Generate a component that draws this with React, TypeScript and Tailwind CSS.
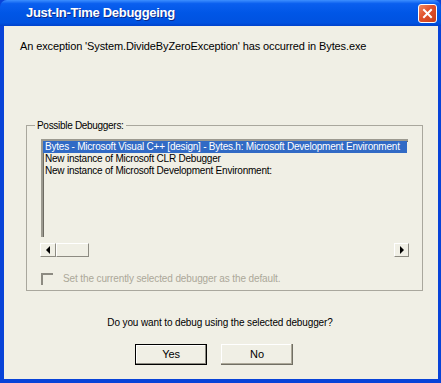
import React from 'react';

const rows = [
  'Bytes - Microsoft Visual C++ [design] - Bytes.h: Microsoft Development Environment',
  'New instance of Microsoft CLR Debugger',
  'New instance of Microsoft Development Environment:',
];

const ArrowLeft = () => (
  <span className="w-0 h-0 border-y-[4px] border-y-transparent border-r-[4px] border-r-black" />
);

const ArrowRight = () => (
  <span className="w-0 h-0 border-y-[4px] border-y-transparent border-l-[4px] border-l-black" />
);

export default function App() {
  return (
    <div className="w-[441px] h-[383px] bg-[#0843d8] flex flex-col font-['Liberation_Sans',Arial,sans-serif] text-[10px] tracking-[-0.12px] text-black select-none">
      {/* Title bar */}
      <div className="h-[26px] shrink-0 flex items-center pl-[26px] pr-[4px] rounded-t-[7px] bg-[linear-gradient(to_bottom,#3d8fff_0%,#0a5fef_14%,#0056e6_50%,#0052e0_88%,#0042cc_100%)]">
        <span className="text-white font-bold text-[13px] tracking-[-0.3px] [text-shadow:1px_1px_0_#0b2a8c]">
          Just-In-Time Debuggeing
        </span>
        <div className="ml-auto w-[19px] h-[19px] rounded-[3px] border border-white bg-[linear-gradient(135deg,#f08a63_0%,#e0502a_45%,#c8401c_100%)] flex items-center justify-center">
          <svg width="11" height="11" viewBox="0 0 11 11">
            <path d="M2 2 L9 9 M9 2 L2 9" stroke="white" strokeWidth="2" strokeLinecap="square" />
          </svg>
        </div>
      </div>

      {/* Client area */}
      <div className="flex-1 ml-[4px] mr-[3px] mb-[4px] bg-[#f0efe5] flex flex-col">
        <p className="pt-[14px] pl-[16px] leading-[13px] text-[11px] tracking-[-0.12px]">
          An exception 'System.DivideByZeroException' has occurred in Bytes.exe
        </p>

        {/* Group box */}
        <div className="relative mt-[72px] ml-[22px] w-[397px] h-[166px] border border-[#a9a79d] flex flex-col">
          <span className="absolute -top-[7px] left-[8px] px-[2px] bg-[#f0efe5] leading-[13px] tracking-[-0.3px]">
            Possible Debuggers:
          </span>

          <div className="mt-[13px] ml-[14px] w-[367px] h-[98px] border-l-2 border-t-2 border-l-[#9c9a90] border-t-[#9c9a90] shadow-[inset_1px_1px_0_#6d6b62] flex flex-col tracking-[-0.22px]">
            {rows.map((r, i) => (
              <div
                key={r}
                className={
                  'h-[12px] leading-[12px] pl-[2px] mr-[1px] whitespace-nowrap overflow-hidden ' +
                  (i === 0 ? 'bg-[#316ac5] text-white' : '')
                }
              >
                {r}
              </div>
            ))}
          </div>

          {/* Horizontal scrollbar */}
          <div className="mt-[6px] ml-[13px] w-[369px] h-[14px] flex">
            <div className="w-[16px] h-[14px] border-t border-l border-t-white border-l-white border-r border-b border-r-[#8d8b82] border-b-[#8d8b82] flex items-center justify-center">
              <ArrowLeft />
            </div>
            <div className="w-[33px] h-[14px] border-t border-l border-t-white border-l-white border-r border-b border-r-[#8d8b82] border-b-[#8d8b82]" />
            <div className="flex-1" />
            <div className="w-[15px] h-[14px] border-t border-l border-t-white border-l-white border-r border-b border-r-[#8d8b82] border-b-[#8d8b82] flex items-center justify-center">
              <ArrowRight />
            </div>
          </div>

          {/* Checkbox */}
          <div className="mt-[15px] ml-[14px] flex items-center gap-[10px] text-[#aca899]">
            <span className="w-[12px] h-[12px] border-l-2 border-t-2 border-[#8d8b82]" />
            <span className="leading-[13px]">Set the currently selected debugger as the default.</span>
          </div>
        </div>

        <p className="mt-[25px] text-center leading-[13px] pr-[2px]">
          Do you want to debug using the selected debugger?
        </p>

        <div className="mt-[15px] flex gap-[14px] pl-[131px]">
          <button className="w-[72px] h-[21px] border border-black bg-[#f0efe5] shadow-[inset_-1px_-1px_0_#8d8b82,inset_1px_1px_0_#ffffff] leading-[19px] text-[11px]">
            Yes
          </button>
          <button className="w-[72px] h-[21px] bg-[#f0efe5] shadow-[inset_-1px_-1px_0_#716f64,inset_-2px_-2px_0_#aca899,inset_1px_1px_0_#ffffff] leading-[21px] text-[11px]">
            No
          </button>
        </div>
      </div>
    </div>
  );
}
